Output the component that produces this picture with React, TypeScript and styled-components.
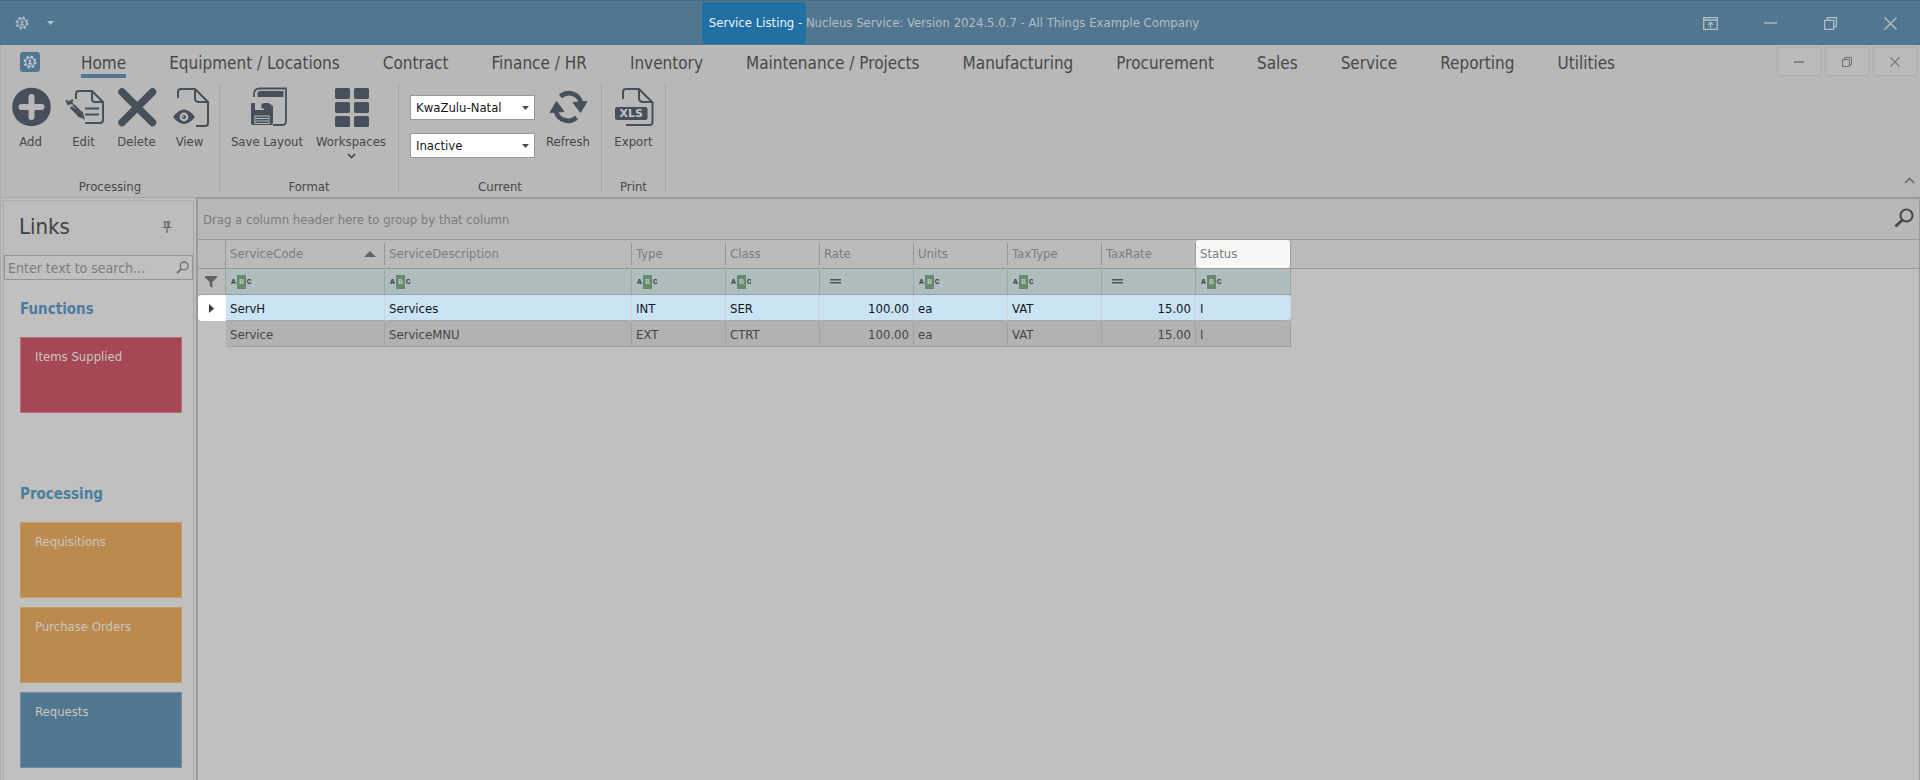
import React from "react";
import styled, { createGlobalStyle } from "styled-components";

const ink = "#47505a";
const paper = "#b8b8b8";
const blue = "#51768f";

const GlobalStyle = createGlobalStyle`
  *, *::before, *::after { box-sizing: border-box; }
  body {
    margin: 0;
    background: #c0c0c0;
    color: #474747;
    font: 13px/16px "DejaVu Sans Condensed", "DejaVu Sans", Tahoma, sans-serif;
  }
  button, input, select { font: inherit; color: inherit; }
  button { border: 0; padding: 0; background: none; cursor: pointer; }
  svg { display: block; flex: none; }
`;

const Window = styled.div`
  display: flex;
  flex-direction: column;
  min-height: 100vh;
  border-left: 1px solid #acacac;
`;

/* Title bar */
const TitleBar = styled.header`
  display: flex;
  align-items: stretch;
  height: 45px;
  margin-left: -1px;
  border-top: 1px solid #4b6c80;
  background: ${blue};
  color: #b4bdc3;
`;
const QuickAccess = styled.div`
  flex: 1;
  display: flex;
  align-items: center;
  gap: 18px;
  padding-left: 15px;
`;
const Title = styled.h1`
  display: flex;
  align-items: center;
  margin: 0;
  padding-right: 34px;
  font-size: 13px;
  font-weight: 400;
  white-space: pre;
`;
const TitleHighlight = styled.span`
  padding: 13px 0 13px 7px;
  border-radius: 4px;
  background: #216fa3;
  color: #eef5fa;
`;
const WindowButtons = styled.div`
  flex: 1;
  display: flex;
  justify-content: flex-end;
`;
const WindowButton = styled.button`
  display: grid;
  place-items: center;
  width: 60px;
`;

/* Tabs */
const TabBar = styled.nav`
  display: flex;
  height: 35px;
  background: ${paper};
`;
const AppBadge = styled.button`
  display: grid;
  place-items: center;
  width: 20px;
  height: 20px;
  margin: 7px 41px 0 19px;
  border-radius: 3px;
  background: ${blue};
  color: #c4ccd1;
`;
const Tabs = styled.div`
  flex: 1;
  display: flex;
  align-items: flex-start;
  gap: 43px;
`;
const Tab = styled.a<{ $active?: boolean }>`
  height: 33px;
  padding-top: 8px;
  border-bottom: 4px solid ${(p) => (p.$active ? blue : "transparent")};
  color: #484848;
  font-size: 17px;
  line-height: 20px;
  text-decoration: none;
  white-space: nowrap;
`;
const ChildButtons = styled.div`
  display: flex;
  gap: 4px;
  padding: 2px 3px 0 0;
`;
const ChildButton = styled.button`
  display: grid;
  place-items: center;
  width: 44px;
  height: 29px;
  border: 1px solid #acacac;
  border-radius: 2px;
  background: #bbb;
  color: #6d6d6d;
`;

/* Ribbon */
const Ribbon = styled.section`
  display: flex;
  background: ${paper};
`;
const Group = styled.section`
  display: flex;
  flex-direction: column;
  height: 109px;
  margin: 3px 0 5px;
  border-right: 1px solid #a8a8a8;
`;
const GroupBody = styled.div<{ $pad: number }>`
  flex: 1;
  display: flex;
  align-items: flex-start;
  padding: 0 ${(p) => p.$pad}px;
`;
const GroupTitle = styled.h2`
  margin: 0;
  font-size: 13px;
  font-weight: 400;
  line-height: 10px;
  text-align: center;
`;
const Command = styled.button<{ $width: number }>`
  display: flex;
  flex-direction: column;
  align-items: center;
  width: ${(p) => p.$width}px;
  padding-top: 4px;
  color: #474747;
  white-space: nowrap;
`;
const CommandLabel = styled.span`
  margin: 7px 0 3px;
`;
const Selectors = styled.div`
  display: flex;
  flex-direction: column;
  gap: 13px;
  padding: 12px 5px 0 6px;
`;
const SelectBox = styled.div`
  position: relative;
  width: 125px;
`;
const Select = styled.select`
  appearance: none;
  display: block;
  width: 100%;
  height: 25px;
  padding: 0 20px 0 5px;
  border: 1px solid #979797;
  border-radius: 0;
  background: #fff;
  color: #14141c;
`;
const SelectCaret = styled.svg`
  position: absolute;
  right: 6px;
  top: 11px;
  pointer-events: none;
`;
const Collapse = styled.button`
  align-self: flex-end;
  margin: 0 5px 13px auto;
  color: #6a6a6a;
`;

/* Links panel */
const Workspace = styled.div`
  flex: 1;
  display: flex;
`;
const Sidebar = styled.aside`
  flex: none;
  width: 195px;
  padding: 2px 2px 0;
  border-top: 1px solid #a9a9a9;
  background: #bcbcbc;
`;
const LinksPanel = styled.div`
  height: 100%;
  border: 1px solid #acacac;
  border-bottom: 0;
  background: #c0c0c0;
`;
const LinksHeader = styled.div`
  display: flex;
  align-items: center;
  justify-content: space-between;
  height: 54px;
  padding: 0 21px 2px 15px;
  background: #bcbcbc;
`;
const LinksTitle = styled.h2`
  margin: 0;
  color: #404040;
  font-size: 22px;
  font-weight: 400;
  line-height: 28px;
`;
const SearchField = styled.label`
  display: flex;
  align-items: center;
  height: 25px;
  padding: 0 3px;
  border: 1px solid #959595;
  color: #6c6c6c;
`;
const SearchInput = styled.input`
  flex: 1;
  min-width: 0;
  padding: 0;
  border: 0;
  outline: 0;
  background: transparent;
  font-size: 14px;
  &::placeholder { color: #7c7c7c; opacity: 1; }
`;
const LinkSection = styled.section`
  display: flex;
  flex-direction: column;
  gap: 9px;
  min-height: 185px;
  padding: 19px 11px 0 16px;
`;
const LinkHeading = styled.h3`
  margin: 0 0 9px;
  color: #4c7d9d;
  font-size: 15px;
  line-height: 20px;
`;
const tileColors = {
  red: ["#a54754", "#b56d77"],
  orange: ["#bb8a4f", "#c29a6a"],
  blue: [blue, "#738f9f"],
};
const Tile = styled.button<{ $tone: keyof typeof tileColors }>`
  display: flex;
  height: 76px;
  padding: 11px 14px;
  border: 1px solid ${(p) => tileColors[p.$tone][1]};
  background: ${(p) => tileColors[p.$tone][0]};
  color: #cac6c0;
  text-align: left;
`;

/* Grid */
const GridPanel = styled.main`
  flex: 1;
  min-width: 0;
  border: 2px solid #9a9a9a;
  border-width: 2px 1px 0 2px;
`;
const GroupPanel = styled.div`
  display: flex;
  align-items: center;
  justify-content: space-between;
  height: 41px;
  padding: 2px 5px 0 5px;
  border-bottom: 1px solid #989898;
  background: ${paper};
  color: #7b7b7b;
`;
const FindButton = styled.button`
  margin-bottom: 4px;
  color: #474747;
`;
const Table = styled.table`
  width: 100%;
  table-layout: fixed;
  border-collapse: separate;
  border-spacing: 0;
`;
const Col = styled.col<{ $width?: number }>`
  width: ${(p) => (p.$width ? `${p.$width}px` : "auto")};
`;
const HeadCell = styled.th`
  height: 29px;
  padding: 0;
  border-bottom: 1px solid #989898;
  background: #bbb;
  color: #7b7b7b;
  font-weight: 400;
  text-align: left;
`;
const HeadLabel = styled.div<{ $lit?: boolean }>`
  display: flex;
  align-items: center;
  justify-content: space-between;
  height: ${(p) => (p.$lit ? 28 : 22)}px;
  padding: 0 8px 0 4px;
  border-right: 1px solid #989898;
  border-radius: ${(p) => (p.$lit ? 3 : 0)}px;
  background: ${(p) => (p.$lit ? "#f8f8f8" : "transparent")};
`;
const CornerHead = styled(HeadCell)`
  border-right: 1px solid #989898;
`;
const FilterMark = styled.td`
  height: 26px;
  padding: 0 0 0 7px;
  border-right: 1px solid #a0a0a0;
  border-bottom: 1px solid #a0a0a0;
  background: #bbb;
`;
const FilterCell = styled.td`
  height: 26px;
  padding: 0;
  border-right: 1px solid #9ca8a8;
  border-bottom: 1px solid #9a9f9f;
  background: #aebdbd;
`;
const FilterEditor = styled.div`
  display: flex;
  align-items: center;
  gap: 4px;
  padding-left: 5px;
`;
const FilterInput = styled.input`
  flex: 1;
  min-width: 0;
  height: 20px;
  border: 0;
  outline: 0;
  background: transparent;
`;
const TextOperator = styled.button`
  display: flex;
  align-items: center;
  gap: 1px;
  color: #3a4040;
  font: bold 8px/14px "Liberation Mono", monospace;
`;
const TextOperatorMid = styled.span`
  width: 9px;
  background: #67896f;
  color: #b5c8b9;
  text-align: center;
`;
const EqualOperator = styled.button`
  width: 21px;
  padding-left: 5px;
  color: #4d5555;
`;
const Marker = styled.td<{ $selected?: boolean }>`
  height: 26px;
  padding: 0 0 0 11px;
  border-radius: 4px 0 0 4px;
  background: ${(p) => (p.$selected ? "#fff" : "transparent")};
  color: #3a3a3a;
`;
const Cell = styled.td<{ $selected?: boolean; $end?: boolean; $last?: boolean }>`
  height: 26px;
  padding: 2px 4px 0;
  border-right: 1px solid ${(p) => (p.$selected ? "#cfd2d8" : "#a2a2a2")};
  border-bottom: 1px solid ${(p) => (p.$selected ? "#a3adb5" : "#a2a2a2")};
  border-radius: ${(p) => (p.$selected && p.$last ? "0 4px 4px 0" : "0")};
  background: ${(p) => (p.$selected ? "#cae4f6" : "#b2b2b2")};
  color: ${(p) => (p.$selected ? "#15151c" : "#454545")};
  text-align: ${(p) => (p.$end ? "right" : "left")};
`;

/* Icons */
const Gear = () => (
  <svg width="14" height="14" viewBox="0 0 14 14" fill="none" stroke="currentColor">
    <circle cx="7" cy="7" r="5.6" strokeWidth="1.8" strokeDasharray="2.2 2.2" />
    <circle cx="7" cy="7" r="4.4" strokeWidth="1.1" />
    <circle cx="7" cy="5.8" r="1.3" fill="currentColor" stroke="none" />
    <path d="M5 9.6c0-3 4-3 4 0z" fill="currentColor" stroke="none" />
  </svg>
);
const Caret = () => (
  <svg width="7" height="4" viewBox="0 0 7 4"><path d="M0 0h7L3.5 4z" fill="currentColor" /></svg>
);
const MinimizeIcon = ({ w }: { w: number }) => (
  <svg width={w} height="2" viewBox={`0 0 ${w} 2`}><path d={`M0 1h${w}`} stroke="currentColor" strokeWidth="1.4" /></svg>
);
const RestoreIcon = ({ s }: { s: number }) => (
  <svg width={s} height={s} viewBox="0 0 13 13" fill="none" stroke="currentColor" strokeWidth="1.3">
    <path d="M.7 3.4h9v9h-9zM3.4 3.4V.7h9v9H9.7" />
  </svg>
);
const CloseIcon = ({ s }: { s: number }) => (
  <svg width={s} height={s} viewBox="0 0 13 13" stroke="currentColor" strokeWidth="1.4"><path d="M.5.5l12 12M12.5.5l-12 12" /></svg>
);
const RibbonToggleIcon = () => (
  <svg width="15" height="13" viewBox="0 0 15 13" fill="none" stroke="currentColor" strokeWidth="1.3">
    <path d="M.7.7h13.6v11.6H.7zM.7 3h13.6M7.5 11V5.5M5 7.8l2.5-2.5L10 7.8" />
  </svg>
);
const AddIcon = () => (
  <svg width="40" height="40" viewBox="0 0 40 40">
    <circle cx="20.5" cy="20" r="19.3" fill={ink} />
    <path d="M20.5 10v20M10.5 20h20" stroke={paper} strokeWidth="6" strokeLinecap="round" />
  </svg>
);
const EditIcon = () => (
  <svg width="40" height="40" viewBox="0 0 40 40" fill="none" stroke={ink} strokeWidth="2">
    <path d="M12 12V7q0-3 3-3h13l11 11v18q0 3-3 3H21" />
    <path d="M28 4v8q0 3 3 3h8" />
    <path d="M21 21.5h14M21 27.5h14" strokeWidth="1.8" />
    <path d="M8 19l8.500 8.500" strokeWidth="6" />
    <path d="M2 13.500l4 4M4.500 14.500l4.500 2.500M3 17l6-4" strokeWidth="2.200" />
    <path d="M13.500 29.500l5-5 2.500 8z" fill={ink} stroke="none" />
    <path d="M7 17.500l4 4" stroke={paper} strokeWidth="1" />
  </svg>
);
const DeleteIcon = () => (
  <svg width="40" height="40" viewBox="0 0 40 40" stroke={ink} strokeWidth="7.500" strokeLinecap="round">
    <path d="M5 5l30.500 30.500M35.500 5L5 35.500" />
  </svg>
);
const ViewIcon = () => (
  <svg width="40" height="40" viewBox="0 0 40 40" fill="none" stroke={ink} strokeWidth="2">
    <path d="M8 11V5q0-3 3-3h14l13 13v21q0 3-3 3h-9" />
    <path d="M25 2v9q0 4 4 4h9" />
    <path d="M3 30q11-15 22 0q-11 14-22 0z" fill={ink} stroke="none" />
    <circle cx="14" cy="30" r="4.400" fill={paper} stroke="none" />
    <circle cx="14" cy="30" r="2" fill={ink} stroke="none" />
    <circle cx="13.500" cy="29.500" r=".8" fill={paper} stroke="none" />
  </svg>
);
const SaveLayoutIcon = () => (
  <svg width="40" height="40" viewBox="0 0 40 40" fill="none" stroke={ink} strokeWidth="1.800">
    <path d="M7 10V7q0-5.500 5.500-5.500H39V34q0 4-4 4H26" />
    <path d="M10.500 10V7q0-3 2.500-3h23.500v6z" fill={ink} stroke="none" />
    <path d="M4 17q0-1 1-1h3v7h9v-7h4.500L26 19v17q0 2-2 2H6q-2 0-2-2z" fill={ink} stroke="none" />
    <path d="M14.500 16.500h2.500v5h-2.500z" fill={ink} stroke="none" />
    <path d="M7.500 28.500h15v8.500h-15z" fill={paper} stroke="none" />
    <path d="M8.500 29.500h13v6.500h-13z" fill={ink} stroke="none" />
    <path d="M9 31.500h12M9 34h12" stroke={paper} strokeWidth="1" />
  </svg>
);
const WorkspacesIcon = () => (
  <svg width="40" height="40" viewBox="0 0 40 40" fill={ink}>
    {[1, 15, 29].map((y) => (
      <React.Fragment key={y}>
        <rect x="4" y={y} width="15" height="11" rx="1.5" />
        <rect x="23" y={y} width="15" height="11" rx="1.5" />
      </React.Fragment>
    ))}
  </svg>
);
const RefreshIcon = () => (
  <svg width="40" height="40" viewBox="0 0 40 40" fill="none" stroke={ink} strokeWidth="4.600">
    <path d="M12.500 9.500a12.500 12.500 0 0 1 20.500 6" />
    <path d="M28.500 30.500a12.500 12.500 0 0 1-20.500-6" />
    <path d="M25 15.500l14-1-6.500 11z" fill={ink} strokeWidth="1" strokeLinejoin="round" />
    <path d="M16 24.500l-14 1 6.500-11z" fill={ink} strokeWidth="1" strokeLinejoin="round" />
  </svg>
);
const ExportIcon = () => (
  <svg width="40" height="40" viewBox="0 0 40 40" fill="none" stroke={ink} strokeWidth="2">
    <path d="M9 12V5q0-3 3-3h13l13.500 13.500V35q0 3-3 3H12" />
    <path d="M25 2v9q0 4 4 4h9" />
    <rect x="1" y="20" width="32.500" height="13" rx="2" fill={ink} stroke="none" />
    <text x="17.300" y="30.300" textAnchor="middle" fill="#c4c4c4" stroke="none" fontFamily="DejaVu Sans, sans-serif" fontWeight="700" fontSize="11">XLS</text>
  </svg>
);
const Chevron = ({ up }: { up?: boolean }) => (
  <svg width="11" height="7" viewBox="0 0 11 7" fill="none" stroke="currentColor" strokeWidth="1.700">
    <path d={up ? "M1 6l4.500-4.500L10 6" : "M2 1l3.500 3.500L9 1"} />
  </svg>
);
const SearchIcon = ({ s, w }: { s: number; w: number }) => (
  <svg width={s} height={s} viewBox="0 0 20 20" fill="none" stroke="currentColor" strokeWidth={w}>
    <circle cx="12.500" cy="7.500" r="6" />
    <path d="M8.200 12L1.500 18.500" strokeWidth={w * 1.400} />
  </svg>
);
const PinIcon = () => (
  <svg width="10" height="12" viewBox="0 0 10 12" fill="none" stroke="#646464" strokeWidth="1.200">
    <path d="M1.500.8h7M3 1v5M6.500 1v5M.5 6.500h9M5 6.500V12" />
    <path d="M6.300 1v5" strokeWidth="1.800" />
  </svg>
);
const FunnelIcon = () => (
  <svg width="12" height="12" viewBox="0 0 12 12"><path d="M0 0h12v1.500L7.300 6v6l-2.600-2V6L0 1.500z" fill="#636363" /></svg>
);
const SortIcon = () => (
  <svg width="12" height="6" viewBox="0 0 12 6"><path d="M0 6h12L6 0z" fill="#666" /></svg>
);
const EqualIcon = () => (
  <svg width="11" height="5" viewBox="0 0 11 5" stroke="currentColor"><path d="M0 .8h11M0 3.800h11" strokeWidth="1.400" /></svg>
);
const RowArrow = () => (
  <svg width="5" height="9" viewBox="0 0 5 9"><path d="M0 0v9l5-4.500z" fill="currentColor" /></svg>
);

/* Data */
const tabs = ["Home", "Equipment / Locations", "Contract", "Finance / HR", "Inventory", "Maintenance / Projects", "Manufacturing", "Procurement", "Sales", "Service", "Reporting", "Utilities"];

const columns: { name: string; width: number; numeric?: boolean; sorted?: boolean; lit?: boolean }[] = [
  { name: "ServiceCode", width: 159, sorted: true },
  { name: "ServiceDescription", width: 247 },
  { name: "Type", width: 94 },
  { name: "Class", width: 94 },
  { name: "Rate", width: 94, numeric: true },
  { name: "Units", width: 94 },
  { name: "TaxType", width: 94 },
  { name: "TaxRate", width: 94, numeric: true },
  { name: "Status", width: 95, lit: true },
];

const rows = [
  ["ServH", "Services", "INT", "SER", "100.00", "ea", "VAT", "15.00", "I"],
  ["Service", "ServiceMNU", "EXT", "CTRT", "100.00", "ea", "VAT", "15.00", "I"],
];

const links: { heading: string; tiles: { label: string; tone: keyof typeof tileColors }[] }[] = [
  { heading: "Functions", tiles: [{ label: "Items Supplied", tone: "red" }] },
  {
    heading: "Processing",
    tiles: [
      { label: "Requisitions", tone: "orange" },
      { label: "Purchase Orders", tone: "orange" },
      { label: "Requests", tone: "blue" },
    ],
  },
];

const CommandButton = ({ label, width, icon, menu }: { label: string; width: number; icon: React.ReactNode; menu?: boolean }) => (
  <Command $width={width} type="button">
    {icon}
    <CommandLabel>{label}</CommandLabel>
    {menu && <Chevron />}
  </Command>
);

const RibbonGroup = ({ title, pad, children }: { title: string; pad: number; children: React.ReactNode }) => (
  <Group aria-label={title}>
    <GroupBody $pad={pad}>{children}</GroupBody>
    <GroupTitle>{title}</GroupTitle>
  </Group>
);

const Dropdown = ({ label, options }: { label: string; options: string[] }) => (
  <SelectBox>
    <Select aria-label={label}>
      {options.map((o) => <option key={o}>{o}</option>)}
    </Select>
    <SelectCaret width="7" height="4" viewBox="0 0 7 4"><path d="M0 0h7L3.5 4z" fill="#4a4a4a" /></SelectCaret>
  </SelectBox>
);

export default function App() {
  return (
    <Window>
      <GlobalStyle />
      <TitleBar>
        <QuickAccess>
          <button type="button" aria-label="Application menu"><Gear /></button>
          <button type="button" aria-label="Customize toolbar"><Caret /></button>
        </QuickAccess>
        <Title>
          <TitleHighlight>{"Service Listing - "}</TitleHighlight>
          Nucleus Service: Version 2024.5.0.7 - All Things Example Company
        </Title>
        <WindowButtons>
          <WindowButton type="button" aria-label="Ribbon display"><RibbonToggleIcon /></WindowButton>
          <WindowButton type="button" aria-label="Minimize"><MinimizeIcon w={13} /></WindowButton>
          <WindowButton type="button" aria-label="Restore"><RestoreIcon s={13} /></WindowButton>
          <WindowButton type="button" aria-label="Close"><CloseIcon s={13} /></WindowButton>
        </WindowButtons>
      </TitleBar>

      <TabBar>
        <AppBadge type="button" aria-label="Nucleus"><Gear /></AppBadge>
        <Tabs>
          {tabs.map((t, i) => <Tab key={t} href="#" $active={i === 0}>{t}</Tab>)}
        </Tabs>
        <ChildButtons>
          <ChildButton type="button" aria-label="Minimize window"><MinimizeIcon w={10} /></ChildButton>
          <ChildButton type="button" aria-label="Restore window"><RestoreIcon s={10} /></ChildButton>
          <ChildButton type="button" aria-label="Close window"><CloseIcon s={10} /></ChildButton>
        </ChildButtons>
      </TabBar>

      <Ribbon>
        <RibbonGroup title="Processing" pad={3}>
          <CommandButton label="Add" width={53} icon={<AddIcon />} />
          <CommandButton label="Edit" width={53} icon={<EditIcon />} />
          <CommandButton label="Delete" width={53} icon={<DeleteIcon />} />
          <CommandButton label="View" width={53} icon={<ViewIcon />} />
        </RibbonGroup>
        <RibbonGroup title="Format" pad={5}>
          <CommandButton label="Save Layout" width={84} icon={<SaveLayoutIcon />} />
          <CommandButton label="Workspaces" width={84} icon={<WorkspacesIcon />} menu />
        </RibbonGroup>
        <RibbonGroup title="Current" pad={5}>
          <Selectors>
            <Dropdown label="Branch" options={["KwaZulu-Natal"]} />
            <Dropdown label="Status" options={["Inactive", "Active"]} />
          </Selectors>
          <CommandButton label="Refresh" width={56} icon={<RefreshIcon />} />
        </RibbonGroup>
        <RibbonGroup title="Print" pad={5}>
          <CommandButton label="Export" width={53} icon={<ExportIcon />} />
        </RibbonGroup>
        <Collapse type="button" aria-label="Collapse ribbon"><Chevron up /></Collapse>
      </Ribbon>

      <Workspace>
        <Sidebar>
          <LinksPanel>
            <LinksHeader>
              <LinksTitle>Links</LinksTitle>
              <button type="button" aria-label="Pin panel"><PinIcon /></button>
            </LinksHeader>
            <SearchField>
              <SearchInput type="text" aria-label="Search links" placeholder="Enter text to search..." />
              <SearchIcon s={13} w={2} />
            </SearchField>
            {links.map((s) => (
              <LinkSection key={s.heading}>
                <LinkHeading>{s.heading}</LinkHeading>
                {s.tiles.map((t) => <Tile key={t.label} type="button" $tone={t.tone}>{t.label}</Tile>)}
              </LinkSection>
            ))}
          </LinksPanel>
        </Sidebar>

        <GridPanel>
          <GroupPanel>
            Drag a column header here to group by that column
            <FindButton type="button" aria-label="Find"><SearchIcon s={20} w={2} /></FindButton>
          </GroupPanel>
          <Table>
            <colgroup>
              <Col $width={28} />
              {columns.map((c) => <Col key={c.name} $width={c.width} />)}
              <Col />
            </colgroup>
            <thead>
              <tr>
                <CornerHead />
                {columns.map((c) => (
                  <HeadCell key={c.name} scope="col">
                    <HeadLabel $lit={c.lit}>{c.name}{c.sorted && <SortIcon />}</HeadLabel>
                  </HeadCell>
                ))}
                <HeadCell />
              </tr>
            </thead>
            <tbody>
              <tr>
                <FilterMark><FunnelIcon /></FilterMark>
                {columns.map((c) => (
                  <FilterCell key={c.name}>
                    <FilterEditor>
                      {c.numeric ? (
                        <EqualOperator type="button" aria-label="Equals"><EqualIcon /></EqualOperator>
                      ) : (
                        <TextOperator type="button" aria-label="Contains">A<TextOperatorMid>B</TextOperatorMid>C</TextOperator>
                      )}
                      <FilterInput type="text" aria-label={`Filter ${c.name}`} />
                    </FilterEditor>
                  </FilterCell>
                ))}
              </tr>
              {rows.map((r, ri) => (
                <tr key={r[0]}>
                  <Marker $selected={ri === 0}>{ri === 0 && <RowArrow />}</Marker>
                  {r.map((v, i) => (
                    <Cell key={columns[i].name} $selected={ri === 0} $end={columns[i].numeric} $last={i === r.length - 1}>{v}</Cell>
                  ))}
                </tr>
              ))}
            </tbody>
          </Table>
        </GridPanel>
      </Workspace>
    </Window>
  );
}
